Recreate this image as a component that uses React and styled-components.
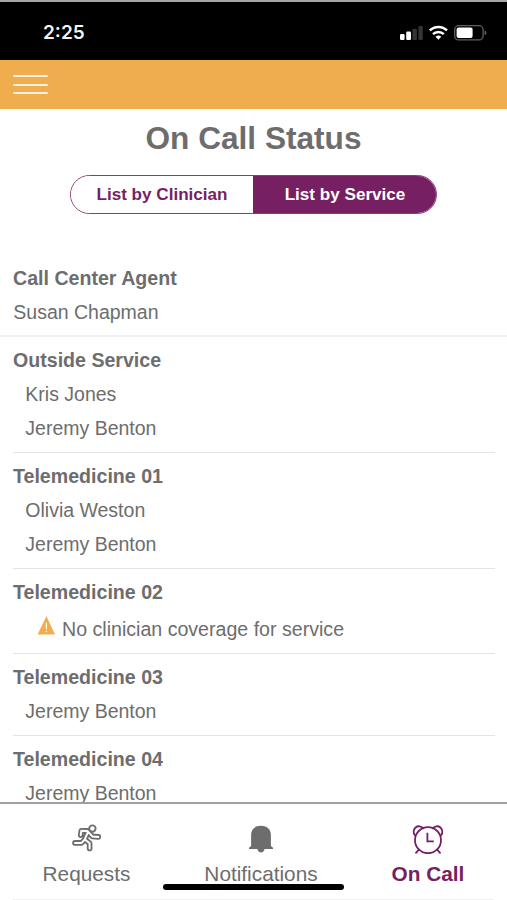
import React from 'react';
import styled, { createGlobalStyle } from 'styled-components';

const GlobalStyle = createGlobalStyle`
  * {
    box-sizing: border-box;
  }
  body {
    margin: 0;
    background: #FFFFFF;
    font-family: 'Liberation Sans', Arial, sans-serif;
    color: #6D6D6D;
  }
`;

const Screen = styled.div`
  position: relative;
  width: 507px;
  height: 900px;
  overflow: hidden;
  display: flex;
  flex-direction: column;
  background: #FFFFFF;
`;
const StatusBar = styled.div`
  flex: none;
  height: 60px;
  padding: 3px 20px 0 43px;
  border-top: 2px solid #A3A5A7;
  background: #000000;
  display: flex;
  align-items: center;
  justify-content: space-between;
`;
const Time = styled.div`
  font-family: Inter, sans-serif;
  font-weight: 600;
  font-size: 19px;
  line-height: 24px;
  color: #F4F4F4;
`;
const Header = styled.div`
  flex: none;
  height: 49px;
  padding: 0 13px;
  background: #EFAD4D;
  display: flex;
  align-items: center;
`;
const Menu = styled.div`
  width: 35px;
  display: flex;
  flex-direction: column;
  gap: 6.5px;
`;
const MenuLine = styled.span`
  height: 2px;
  border-radius: 1px;
  background: #FFF3DF;
`;
const Title = styled.h1`
  flex: none;
  margin: 10px 0 0;
  font-size: 31.6px;
  line-height: 38px;
  font-weight: bold;
  text-align: center;
`;
const Toggle = styled.div`
  flex: none;
  width: 367px;
  height: 39px;
  margin: 18px auto 0 70px;
  border: 1px solid #8B3A7A;
  border-radius: 20px;
  overflow: hidden;
  display: flex;
`;
const ToggleOption = styled.div`
  width: ${({ active }) => (active ? '183px' : '182px')};
  padding-left: ${({ active }) => (active ? '1px' : '0')};
  font-size: 17.1px;
  line-height: 37px;
  font-weight: bold;
  text-align: center;
  color: ${({ active }) => (active ? '#FFFFFF' : '#761F63')};
  background: ${({ active }) => (active ? '#761F63' : '#FFFFFF')};
`;
const List = styled.div`
  flex: 1;
  min-height: 0;
  margin-top: 46.7px;
  overflow: hidden;
`;
const Service = styled.div`
  margin: ${({ full }) => (full ? '0' : '0 12px 0 13px')};
  padding: ${({ full }) => (full ? '0 13px 6px' : '5.5px 0 6.9px')};
  border-bottom: ${({ full }) => (full ? '2px solid #F1F1F1' : '1px solid #E4E4E4')};
`;
const ServiceName = styled.div`
  font-size: 19.6px;
  line-height: 34.2px;
  font-weight: bold;
`;
const Clinician = styled.div`
  padding-left: ${({ indent }) => (indent ? '12.3px' : '0.3px')};
  font-size: 19.5px;
  line-height: 34.2px;
`;
const Warning = styled.div`
  height: 37.7px;
  padding: 3.5px 0 0 24px;
  font-size: 19.6px;
  line-height: 34.2px;
  display: flex;
  align-items: flex-start;
  gap: 7px;
  svg {
    margin-top: 4px;
  }
`;
const TabBar = styled.div`
  flex: none;
  height: 98px;
  border-top: 2px solid #A0A0A0;
  padding: 0 13px;
  background: #FFFFFF;
`;
const Tabs = styled.div`
  height: 96px;
  border-bottom: 1px solid #F0F0F0;
  padding-top: 18px;
  display: flex;
`;
const Tab = styled.div`
  width: ${({ width }) => width}px;
  display: flex;
  flex-direction: column;
  align-items: center;
  font-size: 20.8px;
  line-height: 28px;
  font-weight: ${({ active }) => (active ? 'bold' : 'normal')};
  color: ${({ active }) => (active ? '#761F63' : '#6D6D6D')};
  svg {
    margin-bottom: 6px;
  }
`;
const HomeIndicator = styled.div`
  position: absolute;
  left: 163px;
  bottom: 10px;
  width: 181px;
  height: 6px;
  border-radius: 3px;
  background: #000000;
`;

const StatusIcons = () => (
  <svg width="87" height="20" viewBox="0 0 87 20">
    <g fill="#FFFFFF">
      <rect x="0" y="11" width="4.6" height="6" rx="1.2" />
      <rect x="6.2" y="8.5" width="4.8" height="8.5" rx="1.2" />
      <g fill="#343434">
        <rect x="12.5" y="5.7" width="4.4" height="11.3" rx="1" />
        <rect x="18.4" y="3" width="4.4" height="14" rx="1" />
      </g>
    </g>
    <g fill="none" stroke="#FFFFFF" strokeWidth="2.5">
      <path d="M29.8 7.4a12.3 12.3 0 0 1 17.2 0" />
      <path d="M33 11.1a7.7 7.7 0 0 1 10.8 0" />
    </g>
    <path d="M35.5 13.8a4.2 4.2 0 0 1 5.8 0L38.4 16.8z" fill="#FFFFFF" />
    <rect x="54.7" y="2.7" width="28.4" height="14.2" rx="4" fill="none" stroke="#606060" strokeWidth="1.3" />
    <rect x="56.6" y="4.5" width="16" height="10.6" rx="2" fill="#FFFFFF" />
    <path d="M84.6 7.3c2.4.8 2.4 4.2 0 5z" fill="#606060" />
  </svg>
);

const WarningIcon = () => (
  <svg width="18" height="19" viewBox="0 0 18 19">
    <path d="M9.4 .2L18 18.5H.6z" fill="#EFAD4D" />
    <path d="M9.4 6.8v6.5M9.4 14.7v1.6" stroke="#FFF6E8" strokeWidth="1.3" />
  </svg>
);

const limbs = 'M8.7 10.2L9.3 5.8L15.4 5.9L20.3 11.4L26.3 11.9M15.8 7.5L12.6 14.6L9.6 17.9L3 17.9M13 14.5L17.6 18.2L17.6 23.4';

const RunnerIcon = () => (
  <svg width="30" height="32" viewBox="0 0 30 32">
    <g transform="translate(0 3)" fill="none" strokeLinecap="round" strokeLinejoin="round">
      <path d={limbs} stroke="#6D6D6D" strokeWidth="5.6" />
      <path d={limbs} stroke="#FFFFFF" strokeWidth="2" />
      <circle cx="20.4" cy="3.6" r="3.2" fill="#FFFFFF" stroke="#6D6D6D" strokeWidth="1.9" />
    </g>
  </svg>
);

const BellIcon = () => (
  <svg width="26" height="32" viewBox="0 0 26 32">
    <path
      d="M13 3.8C6.5 3.8 3.1 7.9 3.1 12.9V24L1 25.8V26.9H9.4C9.8 29.1 11.3 30.4 13 30.4S16.2 29.1 16.6 26.9H25V25.8L22.9 24V12.9C22.9 7.9 19.5 3.8 13 3.8Z"
      fill="#6D6D6D"
    />
  </svg>
);

const ClockIcon = () => (
  <svg width="32" height="32" viewBox="0 0 32 32">
    <g fill="none" stroke="#761F63" strokeWidth="1.8" strokeLinecap="round">
      <circle cx="16" cy="18.2" r="13" />
      <path d="M2.9 13.2A5 5 0 1 1 11.2 6.2M20.8 6.2A5 5 0 1 1 29.1 13.2" />
      <path d="M6.8 27.7L4 30.8M25.2 27.7L28 30.8" />
      <path d="M15.4 10.8V19.4H21.8" strokeLinecap="butt" />
    </g>
  </svg>
);

const services = [
  { name: 'Outside Service', clinicians: ['Kris Jones', 'Jeremy Benton'] },
  { name: 'Telemedicine 01', clinicians: ['Olivia Weston', 'Jeremy Benton'] },
  { name: 'Telemedicine 02', clinicians: [] },
  { name: 'Telemedicine 03', clinicians: ['Jeremy Benton'] },
  { name: 'Telemedicine 04', clinicians: ['Jeremy Benton'] },
];

export default () => (
  <Screen>
    <GlobalStyle />
    <StatusBar>
      <Time>2:25</Time>
      <StatusIcons />
    </StatusBar>
    <Header>
      <Menu>
        <MenuLine />
        <MenuLine />
        <MenuLine />
      </Menu>
    </Header>
    <Title>On Call Status</Title>
    <Toggle>
      <ToggleOption>List by Clinician</ToggleOption>
      <ToggleOption active>List by Service</ToggleOption>
    </Toggle>
    <List>
      <Service full>
        <ServiceName>Call Center Agent</ServiceName>
        <Clinician>Susan Chapman</Clinician>
      </Service>
      {
        services.map(({ name, clinicians }) => (
          <Service key={name}>
            <ServiceName>{name}</ServiceName>
            {clinicians.map((clinician) => <Clinician key={clinician} indent>{clinician}</Clinician>)}
            {clinicians.length === 0 && (
              <Warning>
                <WarningIcon />
                No clinician coverage for service
              </Warning>
            )}
          </Service>
        ))
      }
    </List>
    <TabBar>
      <Tabs>
        <Tab width={147}>
          <RunnerIcon />
          Requests
        </Tab>
        <Tab width={202}>
          <BellIcon />
          Notifications
        </Tab>
        <Tab width={132} active>
          <ClockIcon />
          On Call
        </Tab>
      </Tabs>
    </TabBar>
    <HomeIndicator />
  </Screen>
);
